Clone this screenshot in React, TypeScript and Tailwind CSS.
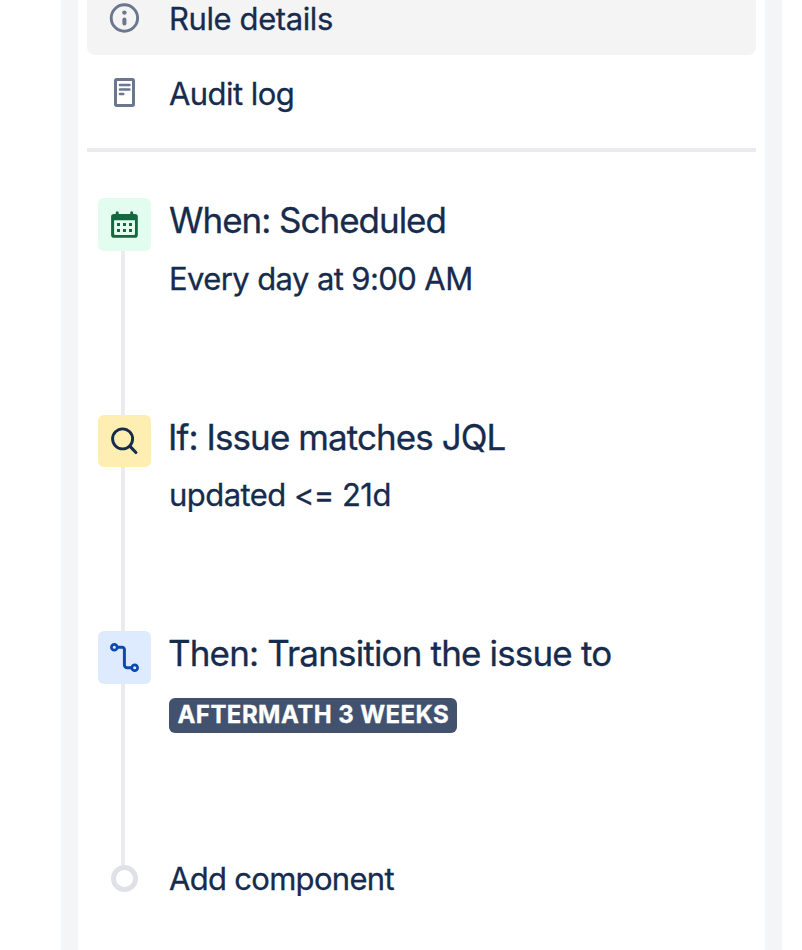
import type { ReactNode } from "react";

const InfoIcon = () => (
  <svg width="30" height="33" viewBox="0 0 30 33" fill="none">
    <circle cx="15.4" cy="15" r="13.2" stroke="#6b778f" strokeWidth="2.9" />
    <circle cx="15.4" cy="9.6" r="2.2" fill="#6b778f" />
    <path d="M15.4 16.5v4" stroke="#6b778f" strokeWidth="4" strokeLinecap="round" />
  </svg>
);

const LogIcon = () => (
  <svg width="30" height="30" viewBox="0 0 30 30" fill="none" stroke="#6b778f">
    <rect x="6.5" y="1.5" width="18" height="26" rx="1.2" strokeWidth="3" />
    <path d="M11 7h9.4M11 11.5h9.4M11 16h3.2" strokeWidth="2.6" strokeLinecap="round" />
  </svg>
);

const CalendarIcon = () => (
  <svg width="53" height="53" viewBox="0 0 53 53">
    <path
      fill="#12693f"
      fillRule="evenodd"
      d="M17.7 14.8a1.5 1.5 0 0 1 3 0V16h11.5v-1.2a1.5 1.5 0 0 1 3 0V16H37a2.8 2.8 0 0 1 2.8 2.8v18.1a2.8 2.8 0 0 1-2.8 2.8H15.9a2.8 2.8 0 0 1-2.8-2.8V18.8a2.8 2.8 0 0 1 2.8-2.8h1.8zM16.1 22.3V35.7a1.2 1.2 0 0 0 1.2 1.2h18.5a1.2 1.2 0 0 0 1.2-1.2V22.3z"
    />
    <path
      fill="#12693f"
      d="M19 25h3v3h-3zM25 25h3v3h-3zM31 25h3v3h-3zM19 31h3v3h-3zM25 31h3v3h-3zM31 31h3v3h-3z"
    />
  </svg>
);

const SearchIcon = () => (
  <svg width="53" height="52" viewBox="0 0 53 52" fill="none" stroke="#172b4d">
    <circle cx="24.6" cy="23.9" r="10" strokeWidth="2.9" />
    <path d="M31.8 31.2l6.1 6.3" strokeWidth="3.1" strokeLinecap="round" />
  </svg>
);

const TransitionIcon = () => (
  <svg width="53" height="53" viewBox="0 0 53 53" fill="none" stroke="#0c4aaf">
    <circle cx="16.3" cy="16.2" r="2.9" strokeWidth="2.7" />
    <circle cx="36.7" cy="36.7" r="2.9" strokeWidth="2.7" />
    <path d="M19.5 16.2H24a2.4 2.4 0 0 1 2.4 2.4V34a2.7 2.7 0 0 0 2.7 2.7H33.5" strokeWidth="3" />
  </svg>
);

type StepProps = {
  icon: ReactNode;
  tint: string;
  size: string;
  title: string;
  titleClass: string;
  children: ReactNode;
};

function Step({ icon, tint, size, title, titleClass, children }: StepProps) {
  return (
    <li className={`flex gap-[18px] ${size}`}>
      <div className="flex w-[53px] shrink-0 flex-col">
        <div className={`shrink-0 overflow-hidden rounded-[6px] ${tint}`}>{icon}</div>
        <div className="ml-[23px] w-1 grow bg-[#ebebef]" />
      </div>
      <div className="whitespace-nowrap">
        <h2 className={`mt-0.5 text-[35px] leading-10 ${titleClass}`}>{title}</h2>
        {children}
      </div>
    </li>
  );
}

export default function App() {
  return (
    <div className="flex h-[950px] w-[802px] overflow-hidden bg-white font-['Inter',sans-serif] text-[31px] leading-10 text-[#172b4d] [-webkit-text-stroke:0.3px]">
      <aside className="ml-[61px] w-[721px] border-x-[17px] border-[#f4f5f7] px-[9px]">
        <nav className="whitespace-nowrap">
          <div className="flex h-[55px] rounded-b-[8px] bg-[#f4f4f4]">
            <span className="mt-[3px] ml-[22px]"><InfoIcon /></span>
            <span className="-mt-px ml-[30px] tracking-[-0.4px]">Rule details</span>
          </div>
          <div className="flex h-[93px]">
            <span className="mt-[23px] ml-[22px]"><LogIcon /></span>
            <span className="mt-[19px] ml-[30px] tracking-[-0.55px]">Audit log</span>
          </div>
        </nav>
        <hr className="h-1 border-0 bg-[#ebebef]" />

        <ul className="mt-[46px] ml-[11px]">
          <Step
            icon={<CalendarIcon />}
            tint="h-[53px] bg-[#e2fcef]"
            size="h-[217px]"
            title="When: Scheduled"
            titleClass="tracking-[-1.02px]"
          >
            <p className="mt-[19px] tracking-[-0.6px]">Every day at 9:00 AM</p>
          </Step>
          <Step
            icon={<SearchIcon />}
            tint="h-[52px] bg-[#feeeb2]"
            size="h-[216px]"
            title="If: Issue matches JQL"
            titleClass="-ml-px tracking-[-0.93px]"
          >
            <p className="mt-[18px] tracking-[-0.55px]">updated &lt;= 21d</p>
          </Step>
          <Step
            icon={<TransitionIcon />}
            tint="h-[53px] bg-[#deebff]"
            size="h-[234px]"
            title="Then: Transition the issue to"
            titleClass="-ml-px tracking-[-0.84px]"
          >
            <p className="mt-[25px] flex h-[35px] w-[288px] rounded-[6px] bg-[#42526e] pl-[8.5px] text-[24px] leading-[33px] font-bold tracking-[0.45px] text-white">
              AFTERMATH 3 WEEKS
            </p>
          </Step>
          <li className="flex">
            <span className="ml-[13px] size-[27px] rounded-full border-[5px] border-[#dfe1e6]" />
            <span className="-mt-[6px] ml-[31px] tracking-[-0.7px]">Add component</span>
          </li>
        </ul>
      </aside>
    </div>
  );
}
